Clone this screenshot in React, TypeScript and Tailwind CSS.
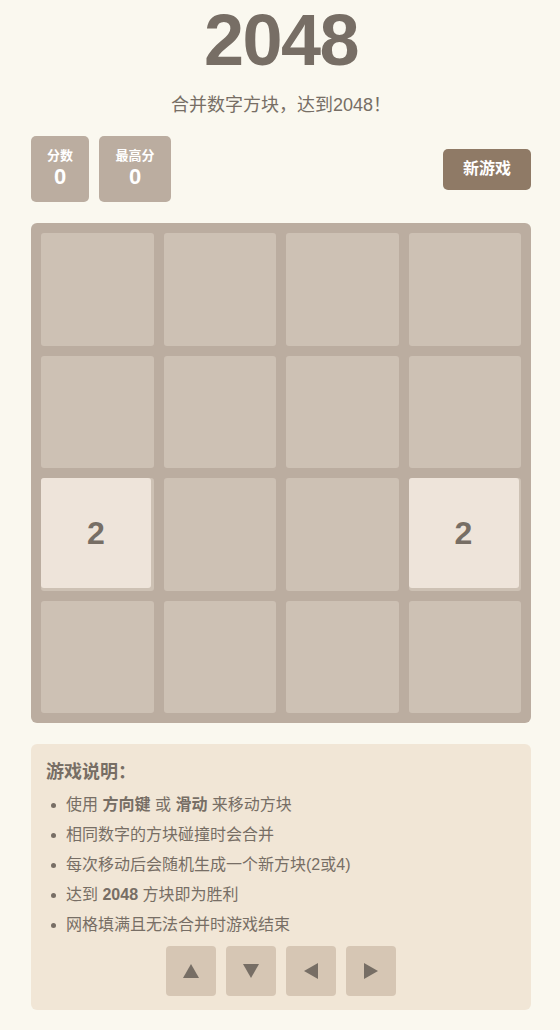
import React from "react";

const font = { fontFamily: '"Liberation Sans", "Noto Sans CJK SC", Arial, sans-serif' };

const board: number[][] = [
  [0, 0, 0, 0],
  [0, 0, 0, 0],
  [2, 0, 0, 2],
  [0, 0, 0, 0],
];

function Tri({ dir }: { dir: "up" | "down" | "left" | "right" }) {
  const pts: Record<string, string> = {
    up: "8,1 16,15 0,15",
    down: "0,1 16,1 8,15",
    left: "15,0 15,16 1,8",
    right: "1,0 1,16 15,8",
  };
  return (
    <svg width="16" height="16" viewBox="0 0 16 16">
      <polygon points={pts[dir]} fill="#776e65" />
    </svg>
  );
}

export default function App() {
  return (
    <div className="min-h-[1030px] w-full bg-[#faf8ef] text-[#776e65]" style={font}>
      <div className="ml-[31px] flex w-[500px] flex-col">
        <h1 className="mt-[4px] text-center text-[72px] font-bold leading-[72px] tracking-[-1.5px]">2048</h1>
        <p className="mt-[18px] text-center text-[18px] leading-[22px]">合并数字方块，达到2048！</p>

        <div className="mt-[20px] flex items-center justify-between">
          <div className="flex gap-[10px]">
            <div className="flex h-[66px] w-[58px] flex-col items-center justify-center rounded-[5px] bg-[#bbada0] text-white">
              <span className="text-[13px] font-bold leading-[16px]">分数</span>
              <span className="text-[22px] font-bold leading-[26px]">0</span>
            </div>
            <div className="flex h-[66px] w-[72px] flex-col items-center justify-center rounded-[5px] bg-[#bbada0] text-white">
              <span className="text-[13px] font-bold leading-[16px]">最高分</span>
              <span className="text-[22px] font-bold leading-[26px]">0</span>
            </div>
          </div>
          <button className="h-[41px] w-[88px] rounded-[5px] bg-[#8f7a66] text-[16px] font-bold text-white">新游戏</button>
        </div>

        <div className="mt-[21px] grid h-[500px] grid-cols-4 grid-rows-4 gap-[10px] rounded-[6px] bg-[#bbada0] p-[10px]">
          {board.flat().map((v, i) => (
            <div key={i} className="relative rounded-[3px] bg-[#cdc1b4]">
              {v > 0 && (
                <div className="absolute left-0 top-0 flex h-[110px] w-[110px] items-center justify-center rounded-[3px] bg-[#eee4da] text-[32px] font-bold">
                  {v}
                </div>
              )}
            </div>
          ))}
        </div>

        <div className="mt-[21px] rounded-[6px] bg-[#f1e6d6] px-[15px] pb-[14px] pt-[16px]">
          <h2 className="text-[18px] font-bold leading-[24px]">游戏说明：</h2>
          <ul className="mt-[6px] flex flex-col">
            {[
              <>使用 <b>方向键</b> 或 <b>滑动</b> 来移动方块</>,
              <>相同数字的方块碰撞时会合并</>,
              <>每次移动后会随机生成一个新方块(2或4)</>,
              <>达到 <b>2048</b> 方块即为胜利</>,
              <>网格填满且无法合并时游戏结束</>,
            ].map((c, i) => (
              <li key={i} className="flex items-center text-[16px] leading-[30px]">
                <span className="ml-[5px] mr-[10px] inline-block h-[5px] w-[5px] rounded-full bg-[#776e65]" />
                <span>{c}</span>
              </li>
            ))}
          </ul>
          <div className="mt-[6px] flex justify-center gap-[10px]">
            {(["up", "down", "left", "right"] as const).map((d) => (
              <button key={d} className="flex h-[50px] w-[50px] items-center justify-center rounded-[4px] bg-[#d6c6b4]">
                <Tri dir={d} />
              </button>
            ))}
          </div>
        </div>
      </div>
    </div>
  );
}
